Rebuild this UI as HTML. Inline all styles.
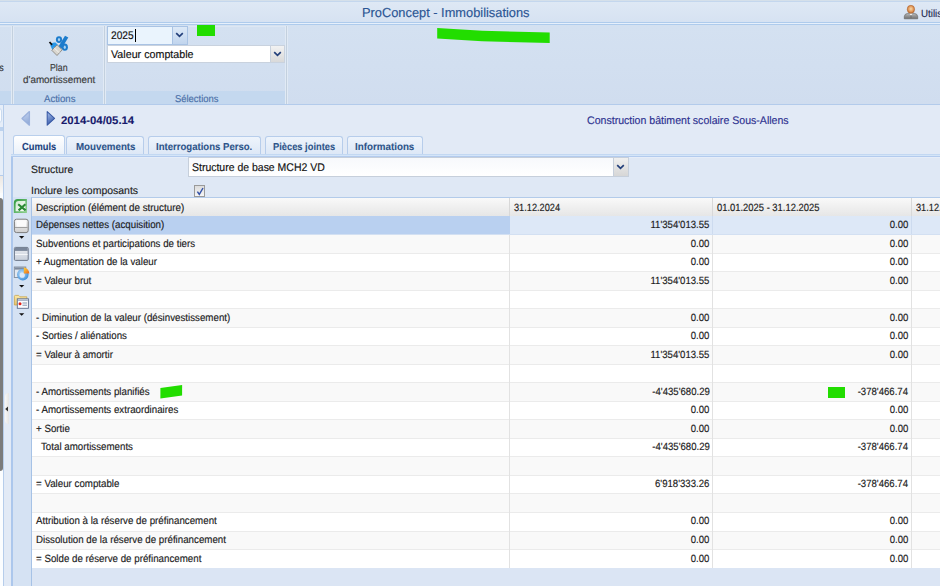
<!DOCTYPE html>
<html><head><meta charset="utf-8">
<style>
*{margin:0;padding:0;box-sizing:border-box}
html,body{width:940px;height:586px;overflow:hidden}
body{position:relative;text-rendering:geometricPrecision;background:#e2eaf6;font-family:"Liberation Sans",sans-serif;color:#1e1e1e}
.a{position:absolute}
.t{position:absolute;white-space:nowrap;line-height:1;-webkit-text-stroke:0.15px currentColor}
.g{font-size:9.7px;color:#1b1b1b}
.tab{position:absolute;border:1px solid #b7cdeb;border-bottom:none;border-radius:3px 3px 0 0;background:linear-gradient(#eef4fc,#dce7f6)}
.tabt{position:absolute;white-space:nowrap;line-height:1;font-size:9.6px;font-weight:bold;color:#1f4a80}
</style></head><body>

<!-- Title bar -->
<div class="a" style="left:0;top:0;width:940px;height:22px;background:linear-gradient(#dfe9f5,#d6e2f2)"></div>
<div class="a" style="left:0;top:0;width:940px;height:1px;background:#d5e0ea"></div>
<div class="a" style="left:0;top:1px;width:940px;height:1px;background:#c4d7ee"></div>
<div class="a" style="left:0;top:22px;width:940px;height:1px;background:#aecbec"></div>
<div class="a" style="left:0;top:23px;width:940px;height:1px;background:#e6f0fc"></div>
<div class="a" style="left:0;top:24px;width:940px;height:1px;background:#aecbec"></div>
<svg class="a" style="left:903px;top:4px" width="16" height="16" viewBox="0 0 16 16">
 <defs><radialGradient id="hd" cx="0.5" cy="0.45" r="0.55"><stop offset="0" stop-color="#f8d9a8"/><stop offset="0.6" stop-color="#e29a5c"/><stop offset="1" stop-color="#b8652a"/></radialGradient>
 <linearGradient id="bd" x1="0" y1="0" x2="0" y2="1"><stop offset="0" stop-color="#b8b8b8"/><stop offset="1" stop-color="#707070"/></linearGradient></defs>
 <path d="M1.3 14.8 L1.3 12.6 Q1.6 9.6 4.6 9.4 L11.4 9.4 Q14.4 9.6 14.7 12.6 L14.7 14.8 Z" fill="url(#bd)" stroke="#5e5e5e" stroke-width="0.6"/>
 <path d="M6.6 9.4 L8 12.6 L9.4 9.4Z" fill="#f2f2f2"/>
 <path d="M7.6 11 L8 14.8 L8.4 11Z" fill="#3a3a3a"/>
 <ellipse cx="7.9" cy="5.3" rx="3.7" ry="4" fill="url(#hd)" stroke="#b0642c" stroke-width="0.5"/>
</svg>

<!-- Ribbon -->
<div class="a" style="left:0;top:25px;width:940px;height:80px;background:linear-gradient(#d4e1f1,#d0ddef)"></div>
<div class="a" style="left:0;top:26px;width:287px;height:1px;background:#dde7f3"></div>
<!-- left partial group -->
<div class="a" style="left:0;top:91px;width:11px;height:13px;background:#c4d8ef"></div>
<div class="a" style="left:11px;top:26px;width:1px;height:78px;background:#e1eaf5"></div><div class="a" style="left:12px;top:26px;width:1px;height:78px;background:#c3d0de"></div><div class="a" style="left:13px;top:26px;width:1px;height:78px;background:#e1eaf5"></div>
<!-- Actions group -->
<div class="a" style="left:14px;top:91px;width:89px;height:13px;background:#c4d8ef"></div>
<div class="a" style="left:103px;top:26px;width:1px;height:78px;background:#e1eaf5"></div><div class="a" style="left:104px;top:26px;width:1px;height:78px;background:#c3d0de"></div><div class="a" style="left:105px;top:26px;width:1px;height:78px;background:#e1eaf5"></div>
<svg class="a" style="left:48px;top:35px" width="22" height="22" viewBox="0 0 22 22">
 <g fill="#1d7ccc">
  <ellipse cx="11" cy="4.6" rx="3.1" ry="3.4"/>
  <ellipse cx="16.8" cy="12.2" rx="3.1" ry="3.6"/>
  <path d="M17 0.8 L20.3 2.6 L11.8 16.5 L8.6 14.6 Z"/>
 </g>
 <ellipse cx="11" cy="4.6" rx="1.1" ry="1.6" fill="#a7d2f2"/>
 <ellipse cx="16.8" cy="12.2" rx="1.1" ry="1.7" fill="#a7d2f2"/>
 <path d="M2.3 10.5 Q3.5 7 7.5 7.5 L10.5 10.5 L5 16 Z" fill="#2a98e8"/>
 <path d="M9.2 9.8 L14.2 14.8 L9 20.5 L3.8 15.3 Z" fill="#d9d6cf" stroke="#8b8780" stroke-width="0.9"/>
 <path d="M6.2 12.8 L11.2 17.8" stroke="#f4f4f0" stroke-width="1"/>
 <path d="M1.5 7 L4 9.8" stroke="#111" stroke-width="1.8"/>
</svg>
<!-- Selections group -->
<div class="a" style="left:106px;top:91px;width:179px;height:13px;background:#c4d8ef"></div>
<div class="a" style="left:285px;top:26px;width:1px;height:78px;background:#e1eaf5"></div><div class="a" style="left:286px;top:26px;width:1px;height:78px;background:#c3d0de"></div><div class="a" style="left:287px;top:26px;width:1px;height:78px;background:#e1eaf5"></div>
<!-- combo 2025 -->
<div class="a" style="left:107px;top:26px;width:81px;height:19px;border:1px solid #a9c3e4;background:#eaf4fd"></div>
<div class="a" style="left:172px;top:27px;width:15px;height:17px;border-left:1px solid #a9c3e4;background:linear-gradient(#dde9f7,#c1d5ee)"></div>
<svg class="a" style="left:175px;top:31px" width="9" height="8" viewBox="0 0 9 8"><path d="M1.2 2.2 L4.5 5.3 L7.8 2.2" fill="none" stroke="#233f7a" stroke-width="1.7"/></svg>
<div class="a" style="left:134.5px;top:29px;width:1px;height:13px;background:#000"></div>
<!-- combo valeur comptable -->
<div class="a" style="left:107px;top:45px;width:178px;height:18px;border:1px solid #c9d2de;background:#fff"></div>
<div class="a" style="left:270px;top:46px;width:14px;height:16px;border-left:1px solid #c9d2de;background:linear-gradient(#f2f2f2,#d9d9d9)"></div>
<svg class="a" style="left:272.5px;top:50px" width="9" height="8" viewBox="0 0 9 8"><path d="M1.2 2.2 L4.5 5.3 L7.8 2.2" fill="none" stroke="#233f7a" stroke-width="1.7"/></svg>

<div class="a" style="left:0;top:104px;width:940px;height:1px;background:#b3cbeb"></div>

<!-- left edge -->
<div class="a" style="left:0;top:105px;width:3px;height:481px;background:#fbfdff"></div>
<div class="a" style="left:0;top:105px;width:3px;height:70px;background:#e6eef9"></div>
<div class="a" style="left:0;top:175px;width:3px;height:1px;background:#b5cceb"></div>
<div class="a" style="left:0;top:176px;width:3px;height:17px;background:linear-gradient(#ebe7e3,#fafafa)"></div>
<div class="a" style="left:3px;top:105px;width:1px;height:481px;background:#b6cdeb"></div>
<div class="a" style="left:-6px;top:108px;width:8px;height:15px;border-radius:3px;background:#fbfdff;border:1px solid #c9daef"></div>
<div class="a" style="left:0;top:127px;width:3px;height:4px;background:#bcd2ee"></div>
<div class="a" style="left:-4px;top:198px;width:7px;height:273px;border-radius:3px;background:#7b7b7b"></div>
<div class="a" style="left:4.5px;top:393px;width:4.5px;height:31px;border-radius:4px 0 0 4px;background:linear-gradient(90deg,#f7f7f7,#e4e4e4)"></div>
<svg class="a" style="left:4px;top:405px" width="5" height="8" viewBox="0 0 5 8"><path d="M1.2 4 L4 1.6 L4 6.4Z" fill="#333"/></svg>
<!-- nav -->
<svg class="a" style="left:16px;top:106px" width="44" height="24" viewBox="0 0 44 24">
 <defs>
  <linearGradient id="la" x1="0" y1="0" x2="0.3" y2="1"><stop offset="0" stop-color="#c9d8f2"/><stop offset="1" stop-color="#93acd9"/></linearGradient>
  <linearGradient id="ra" x1="0" y1="0" x2="0.3" y2="1"><stop offset="0" stop-color="#a9c2ee"/><stop offset="1" stop-color="#3a5cab"/></linearGradient>
 </defs>
 <path d="M6 12.4 L13.4 5.6 L13.4 19.2 Z" fill="url(#la)" stroke="#9ab1dc" stroke-width="1.3" stroke-linejoin="round"/>
 <path d="M38.6 12.4 L31.2 5.6 L31.2 19.2 Z" fill="url(#ra)" stroke="#3858a4" stroke-width="1.05" stroke-linejoin="round"/>
</svg>
<!-- tab content -->

<!-- tabs -->
<div class="tab" style="left:66px;top:135.5px;width:78px;height:19px"></div>
<div class="tab" style="left:148px;top:135.5px;width:113px;height:19px"></div>
<div class="tab" style="left:264.5px;top:135.5px;width:78.5px;height:19px"></div>
<div class="tab" style="left:346.5px;top:135.5px;width:76.5px;height:19px"></div>
<div class="tab" style="left:13px;top:135px;width:52px;height:19.5px;background:linear-gradient(#ffffff,#e9f0f9);border-color:#b9cfec"></div>

<div class="a" style="left:11px;top:154px;width:935px;height:440px;background:#dfe8f5;border-left:2px solid #acc7ec"></div>
<div class="a" style="left:11px;top:154px;width:929px;height:1px;background:#c3d8f2"></div>
<div class="a" style="left:11px;top:155px;width:929px;height:1px;background:#d4e5f8"></div>
<div class="a" style="left:11px;top:156px;width:929px;height:1px;background:#b3cbee"></div>
<div class="a" style="left:13px;top:157px;width:927px;height:1px;background:#e6edf8"></div>
<!-- structure -->
<div class="a" style="left:188px;top:157px;width:441px;height:20px;border:1px solid #c6cfdb;background:linear-gradient(#f7f9fc,#ffffff)"></div>
<div class="a" style="left:613px;top:158px;width:15px;height:18px;border-left:1px solid #c6cfdb;background:linear-gradient(#f0f0f0,#d6d6d6)"></div>
<svg class="a" style="left:616px;top:162.6px" width="9" height="8" viewBox="0 0 9 8"><path d="M1.2 2.2 L4.5 5.3 L7.8 2.2" fill="none" stroke="#233f7a" stroke-width="1.7"/></svg>
<div class="a" style="left:194px;top:184.5px;width:11px;height:12.5px;border:1px solid #9a9a9a;background:linear-gradient(#dcdcdc,#f6f6f6)"></div>
<svg class="a" style="left:195px;top:185.5px" width="10" height="10" viewBox="0 0 10 10"><path d="M2.4 5.6 L4.3 8.4 L8 2" fill="none" stroke="#3553a8" stroke-width="1.45"/></svg>

<!-- toolbar strip -->
<div class="a" style="left:13px;top:197px;width:18px;height:389px;background:#d5e2f3"></div>

<!-- grid -->
<div class="a" style="left:31px;top:197px;width:909px;height:389px;background:#fff;border-left:1px solid #a6c2e6;border-top:1px solid #b3cbea"></div>
<div class="a" style="left:32px;top:198px;width:908px;height:18px;background:linear-gradient(#f9f9f9,#e6e6e6)"></div>
<div class="a" style="left:509px;top:198px;width:1px;height:18px;background:#d8d8d8"></div>
<div class="a" style="left:712px;top:198px;width:1px;height:18px;background:#d8d8d8"></div>
<div class="a" style="left:911px;top:198px;width:1px;height:18px;background:#d8d8d8"></div>
<div class="a" style="left:32px;top:216px;width:478px;height:18px;background:#b9d0f0"></div>
<div class="a" style="left:510px;top:216px;width:430px;height:18px;background:#dde8f7"></div>
<div class="a" style="left:32px;top:234px;width:908px;height:1px;background:#d3e0f2"></div>
<div class="a" style="left:32px;top:235px;width:908px;height:18px;background:#f9f9f9"></div>
<div class="a" style="left:32px;top:253px;width:908px;height:1px;background:#ebebeb"></div>
<div class="a" style="left:32px;top:254px;width:908px;height:17px;background:#ffffff"></div>
<div class="a" style="left:32px;top:271px;width:908px;height:1px;background:#ebebeb"></div>
<div class="a" style="left:32px;top:272px;width:908px;height:18px;background:#f9f9f9"></div>
<div class="a" style="left:32px;top:290px;width:908px;height:1px;background:#ebebeb"></div>
<div class="a" style="left:32px;top:291px;width:908px;height:17px;background:#ffffff"></div>
<div class="a" style="left:32px;top:308px;width:908px;height:1px;background:#ebebeb"></div>
<div class="a" style="left:32px;top:309px;width:908px;height:18px;background:#f9f9f9"></div>
<div class="a" style="left:32px;top:327px;width:908px;height:1px;background:#ebebeb"></div>
<div class="a" style="left:32px;top:328px;width:908px;height:17px;background:#ffffff"></div>
<div class="a" style="left:32px;top:345px;width:908px;height:1px;background:#ebebeb"></div>
<div class="a" style="left:32px;top:346px;width:908px;height:18px;background:#f9f9f9"></div>
<div class="a" style="left:32px;top:364px;width:908px;height:1px;background:#ebebeb"></div>
<div class="a" style="left:32px;top:365px;width:908px;height:17px;background:#ffffff"></div>
<div class="a" style="left:32px;top:382px;width:908px;height:1px;background:#ebebeb"></div>
<div class="a" style="left:32px;top:383px;width:908px;height:18px;background:#f9f9f9"></div>
<div class="a" style="left:32px;top:401px;width:908px;height:1px;background:#ebebeb"></div>
<div class="a" style="left:32px;top:402px;width:908px;height:17px;background:#ffffff"></div>
<div class="a" style="left:32px;top:419px;width:908px;height:1px;background:#ebebeb"></div>
<div class="a" style="left:32px;top:420px;width:908px;height:18px;background:#f9f9f9"></div>
<div class="a" style="left:32px;top:438px;width:908px;height:1px;background:#ebebeb"></div>
<div class="a" style="left:32px;top:439px;width:908px;height:17px;background:#ffffff"></div>
<div class="a" style="left:32px;top:456px;width:908px;height:1px;background:#ebebeb"></div>
<div class="a" style="left:32px;top:457px;width:908px;height:18px;background:#f9f9f9"></div>
<div class="a" style="left:32px;top:475px;width:908px;height:1px;background:#ebebeb"></div>
<div class="a" style="left:32px;top:476px;width:908px;height:17px;background:#ffffff"></div>
<div class="a" style="left:32px;top:493px;width:908px;height:1px;background:#ebebeb"></div>
<div class="a" style="left:32px;top:494px;width:908px;height:18px;background:#f9f9f9"></div>
<div class="a" style="left:32px;top:512px;width:908px;height:1px;background:#ebebeb"></div>
<div class="a" style="left:32px;top:513px;width:908px;height:18px;background:#ffffff"></div>
<div class="a" style="left:32px;top:531px;width:908px;height:1px;background:#ebebeb"></div>
<div class="a" style="left:32px;top:532px;width:908px;height:17px;background:#f9f9f9"></div>
<div class="a" style="left:32px;top:549px;width:908px;height:1px;background:#ebebeb"></div>
<div class="a" style="left:32px;top:550px;width:908px;height:17px;background:#ffffff"></div>
<div class="a" style="left:32px;top:567px;width:908px;height:1px;background:#ffffff"></div>
<div class="a" style="left:509px;top:235px;width:1px;height:333px;background:#e2e2e2"></div>
<div class="a" style="left:712px;top:235px;width:1px;height:333px;background:#e2e2e2"></div>
<div class="a" style="left:712px;top:216px;width:1px;height:18px;background:#cddbef"></div>
<div class="a" style="left:911px;top:216px;width:1px;height:18px;background:#cddbef"></div>
<div class="a" style="left:911px;top:235px;width:1px;height:333px;background:#e2e2e2"></div>
<div class="a" style="left:32px;top:568px;width:908px;height:18px;background:#dbe5f4"></div>
<div class="a" style="left:828px;top:387px;width:17px;height:10.5px;background:#22dd00"></div>

<!-- toolbar icons -->
<svg class="a" style="left:12px;top:197px" width="18" height="125" viewBox="0 0 18 125">
 <defs>
  <linearGradient id="xg" x1="0" y1="0" x2="1" y2="1"><stop offset="0" stop-color="#2f9a3e"/><stop offset="1" stop-color="#8fd08f"/></linearGradient>
  <linearGradient id="xi" x1="0" y1="0" x2="1" y2="1"><stop offset="0" stop-color="#cfe9cf"/><stop offset="1" stop-color="#ffffff"/></linearGradient>
  <linearGradient id="gg" x1="0" y1="0" x2="0" y2="1"><stop offset="0" stop-color="#f6f6f6"/><stop offset="1" stop-color="#cfcfcf"/></linearGradient>
  <linearGradient id="wg" x1="0" y1="0" x2="0" y2="1"><stop offset="0" stop-color="#e9ecf1"/><stop offset="1" stop-color="#c9d0db"/></linearGradient>
  <radialGradient id="pg" cx="0.4" cy="0.4" r="0.7"><stop offset="0" stop-color="#bfe0fb"/><stop offset="1" stop-color="#2f86d6"/></radialGradient>
  <linearGradient id="og" x1="0" y1="0" x2="1" y2="1"><stop offset="0" stop-color="#ffd23a"/><stop offset="1" stop-color="#e8661a"/></linearGradient>
  <linearGradient id="fg" x1="0" y1="0" x2="0" y2="1"><stop offset="0" stop-color="#fbe8a8"/><stop offset="1" stop-color="#e6c366"/></linearGradient>
 </defs>
 <!-- excel -->
 <path d="M1.8 6 Q1.8 2 5.8 2 L14.9 2 L14.9 15.9 L1.8 15.9 Z" fill="url(#xg)"/>
 <path d="M3.6 7 Q3.6 4 6.6 4 L13.4 4 L13.4 14.3 L3.6 14.3 Z" fill="url(#xi)"/>
 <path d="M6.2 7.2 L13.6 13.4 M13.4 7.2 L6.6 13.4" stroke="#2b8a35" stroke-width="2.1"/>
 <!-- save -->
 <rect x="2.4" y="22.2" width="13.8" height="13.4" rx="2.2" fill="url(#gg)" stroke="#7d7d7d" stroke-width="1"/>
 <rect x="4.5" y="23.2" width="9.6" height="6.5" fill="#fbfbfb"/>
 <path d="M3 30.5 L15.6 30.5" stroke="#9a9a9a" stroke-width="0.9"/>
 <path d="M7 39 L12.3 39 L9.65 41.8Z" fill="#111"/>
 <!-- window -->
 <rect x="2.4" y="50.4" width="13.8" height="13" rx="1" fill="url(#wg)" stroke="#6d788a" stroke-width="1"/>
 <rect x="2.9" y="50.9" width="12.8" height="3" fill="#7a879b"/>
 <path d="M3 57.5 L15.6 57.5" stroke="#f4f6f9" stroke-width="1"/>
 <!-- chart -->
 <rect x="2.3" y="70" width="11.5" height="10.5" fill="#e3e8ef" stroke="#7e8a9c" stroke-width="0.9"/>
 <rect x="2.7" y="70.4" width="10.7" height="2.2" fill="#7e8a9c"/>
 <circle cx="10.8" cy="77.6" r="5.8" fill="url(#pg)"/>
 <circle cx="10.2" cy="78.2" r="2.6" fill="#dbe9f8"/>
 <path d="M11.8 76.4 L11.8 70.6 A5.8 5.8 0 0 1 17.3 76.4 Z" fill="url(#og)"/>
 <path d="M7 88 L12.3 88 L9.65 90.6Z" fill="#111"/>
 <!-- folder report -->
 <path d="M2.4 99.4 Q2.4 98.4 3.4 98.4 L6.6 98.4 L8 99.8 L14.8 99.8 L14.8 108 L2.4 108 Z" fill="url(#fg)" stroke="#c9a54e" stroke-width="0.8"/>
 <rect x="5.3" y="101.8" width="11.1" height="9.5" fill="#f9fbfe" stroke="#5d6e8c" stroke-width="0.9"/>
 <rect x="6" y="102.4" width="9.8" height="1.6" fill="#aab6cc"/>
 <circle cx="8" cy="106.8" r="1.5" fill="#e2231a"/>
 <path d="M10.5 106 L15 106 M10.5 108.2 L15 108.2" stroke="#7b8aa6" stroke-width="0.9"/>
 <path d="M7 116.2 L12.3 116.2 L9.65 118.8Z" fill="#111"/>
</svg>

<!-- green redactions -->
<div class="a" style="left:197px;top:25px;width:18px;height:11px;background:#22dd00"></div>
<svg class="a" style="left:0;top:0" width="940" height="586" viewBox="0 0 940 586">
 <path d="M437.2 27.9 L482.4 30.8 L549.7 32.6 L549.7 43 L482 41.3 L437.2 38.4 Z" fill="#22dd00"/>
 <path d="M160.4 388.1 L182.1 384.9 L182.1 395.4 L160.4 398.6 Z" fill="#22dd00"/>
</svg>

<div class="t" style="top:5.60px;font-size:13.08px;color:#2b5593;left:362.30px;transform:scaleX(0.9805);transform-origin:0 0;">ProConcept - Immobilisations</div>
<div class="t" style="top:10.00px;font-size:10.47px;color:#1e2a50;left:921.00px;transform:scaleX(0.9300);transform-origin:0 0;">Utilis</div>
<div class="t" style="top:64.00px;font-size:10.17px;color:#333;left:-0.90px;transform:scaleX(0.9300);transform-origin:0 0;">s</div>
<div class="t" style="top:63.70px;font-size:10.03px;color:#3c3c3c;left:50.00px;transform:scaleX(0.8767);transform-origin:0 0;">Plan</div>
<div class="t" style="top:76.30px;font-size:10.03px;color:#3c3c3c;left:22.70px;transform:scaleX(0.9868);transform-origin:0 0;">d'amortissement</div>
<div class="t" style="top:94.60px;font-size:9.88px;color:#4a6fa8;left:43.80px;transform:scaleX(0.9722);transform-origin:0 0;">Actions</div>
<div class="t" style="top:94.60px;font-size:9.88px;color:#4a6fa8;left:174.50px;transform:scaleX(0.9543);transform-origin:0 0;">Sélections</div>
<div class="t" style="top:31.20px;font-size:11.05px;color:#111;left:110.70px;transform:scaleX(0.9193);transform-origin:0 0;">2025</div>
<div class="t" style="top:49.70px;font-size:11.05px;color:#111;left:110.70px;transform:scaleX(0.9698);transform-origin:0 0;">Valeur comptable</div>
<div class="t" style="top:115.80px;font-size:11.05px;color:#17196c;font-weight:700;-webkit-text-stroke:0.08px currentColor;left:61.30px;transform:scaleX(1.0270);transform-origin:0 0;">2014-04/05.14</div>
<div class="t" style="top:116.00px;font-size:11.05px;color:#2d3190;left:586.60px;transform:scaleX(0.9575);transform-origin:0 0;">Construction bâtiment scolaire Sous-Allens</div>
<div class="t" style="top:142.60px;font-size:10.17px;color:#1a3f7c;font-weight:700;-webkit-text-stroke:0.08px currentColor;left:22.00px;transform:scaleX(0.9170);transform-origin:0 0;">Cumuls</div>
<div class="t" style="top:142.60px;font-size:10.17px;color:#2d5489;font-weight:700;-webkit-text-stroke:0.08px currentColor;left:75.70px;transform:scaleX(0.9588);transform-origin:0 0;">Mouvements</div>
<div class="t" style="top:142.60px;font-size:10.17px;color:#2d5489;font-weight:700;-webkit-text-stroke:0.08px currentColor;left:156.00px;transform:scaleX(0.9425);transform-origin:0 0;">Interrogations Perso.</div>
<div class="t" style="top:142.60px;font-size:10.17px;color:#2d5489;font-weight:700;-webkit-text-stroke:0.08px currentColor;left:272.50px;transform:scaleX(0.9169);transform-origin:0 0;">Pièces jointes</div>
<div class="t" style="top:142.60px;font-size:10.17px;color:#2d5489;font-weight:700;-webkit-text-stroke:0.08px currentColor;left:354.50px;transform:scaleX(0.9645);transform-origin:0 0;">Informations</div>
<div class="t" style="top:164.70px;font-size:10.61px;color:#1e1e1e;left:30.60px;transform:scaleX(0.9803);transform-origin:0 0;">Structure</div>
<div class="t" style="top:163.10px;font-size:11.19px;color:#111;left:191.90px;transform:scaleX(0.9365);transform-origin:0 0;">Structure de base MCH2 VD</div>
<div class="t" style="top:185.50px;font-size:10.61px;color:#1e1e1e;left:30.60px;transform:scaleX(0.9870);transform-origin:0 0;">Inclure les composants</div>
<div class="t" style="top:204.00px;font-size:10.47px;color:#1b1b1b;left:35.50px;transform:scaleX(0.9398);transform-origin:0 0;">Description (élément de structure)</div>
<div class="t" style="top:204.00px;font-size:10.47px;color:#1b1b1b;left:513.60px;transform:scaleX(0.8797);transform-origin:0 0;">31.12.2024</div>
<div class="t" style="top:204.00px;font-size:10.47px;color:#1b1b1b;left:716.60px;transform:scaleX(0.8974);transform-origin:0 0;">01.01.2025 - 31.12.2025</div>
<div class="t" style="top:204.00px;font-size:10.47px;color:#1b1b1b;left:915.50px;transform:scaleX(0.8797);transform-origin:0 0;">31.12.2025</div>
<div class="t" style="top:221.00px;font-size:10.47px;color:#1b1b1b;left:35.50px;transform:scaleX(0.9300);transform-origin:0 0;">Dépenses nettes (acquisition)</div>
<div class="t" style="top:221.00px;font-size:10.47px;color:#1b1b1b;left:645.44px;transform:scaleX(0.9150);transform-origin:100% 0;">11'354'013.55</div>
<div class="t" style="top:221.00px;font-size:10.47px;color:#1b1b1b;left:887.62px;transform:scaleX(0.9150);transform-origin:100% 0;">0.00</div>
<div class="t" style="top:239.53px;font-size:10.47px;color:#1b1b1b;left:35.50px;transform:scaleX(0.9300);transform-origin:0 0;">Subventions et participations de tiers</div>
<div class="t" style="top:239.53px;font-size:10.47px;color:#1b1b1b;left:689.42px;transform:scaleX(0.9150);transform-origin:100% 0;">0.00</div>
<div class="t" style="top:239.53px;font-size:10.47px;color:#1b1b1b;left:887.62px;transform:scaleX(0.9150);transform-origin:100% 0;">0.00</div>
<div class="t" style="top:258.06px;font-size:10.47px;color:#1b1b1b;left:35.50px;transform:scaleX(0.9300);transform-origin:0 0;">+ Augmentation de la valeur</div>
<div class="t" style="top:258.06px;font-size:10.47px;color:#1b1b1b;left:689.42px;transform:scaleX(0.9150);transform-origin:100% 0;">0.00</div>
<div class="t" style="top:258.06px;font-size:10.47px;color:#1b1b1b;left:887.62px;transform:scaleX(0.9150);transform-origin:100% 0;">0.00</div>
<div class="t" style="top:276.59px;font-size:10.47px;color:#1b1b1b;left:35.50px;transform:scaleX(0.9300);transform-origin:0 0;">= Valeur brut</div>
<div class="t" style="top:276.59px;font-size:10.47px;color:#1b1b1b;left:645.44px;transform:scaleX(0.9150);transform-origin:100% 0;">11'354'013.55</div>
<div class="t" style="top:276.59px;font-size:10.47px;color:#1b1b1b;left:887.62px;transform:scaleX(0.9150);transform-origin:100% 0;">0.00</div>
<div class="t" style="top:313.65px;font-size:10.47px;color:#1b1b1b;left:35.50px;transform:scaleX(0.9300);transform-origin:0 0;">- Diminution de la valeur (désinvestissement)</div>
<div class="t" style="top:313.65px;font-size:10.47px;color:#1b1b1b;left:689.42px;transform:scaleX(0.9150);transform-origin:100% 0;">0.00</div>
<div class="t" style="top:313.65px;font-size:10.47px;color:#1b1b1b;left:887.62px;transform:scaleX(0.9150);transform-origin:100% 0;">0.00</div>
<div class="t" style="top:332.18px;font-size:10.47px;color:#1b1b1b;left:35.50px;transform:scaleX(0.9300);transform-origin:0 0;">- Sorties / aliénations</div>
<div class="t" style="top:332.18px;font-size:10.47px;color:#1b1b1b;left:689.42px;transform:scaleX(0.9150);transform-origin:100% 0;">0.00</div>
<div class="t" style="top:332.18px;font-size:10.47px;color:#1b1b1b;left:887.62px;transform:scaleX(0.9150);transform-origin:100% 0;">0.00</div>
<div class="t" style="top:350.71px;font-size:10.47px;color:#1b1b1b;left:35.50px;transform:scaleX(0.9300);transform-origin:0 0;">= Valeur à amortir</div>
<div class="t" style="top:350.71px;font-size:10.47px;color:#1b1b1b;left:645.44px;transform:scaleX(0.9150);transform-origin:100% 0;">11'354'013.55</div>
<div class="t" style="top:350.71px;font-size:10.47px;color:#1b1b1b;left:887.62px;transform:scaleX(0.9150);transform-origin:100% 0;">0.00</div>
<div class="t" style="top:387.77px;font-size:10.47px;color:#1b1b1b;left:35.50px;transform:scaleX(0.9300);transform-origin:0 0;">- Amortissements planifiés</div>
<div class="t" style="top:387.77px;font-size:10.47px;color:#1b1b1b;left:647.00px;transform:scaleX(0.9150);transform-origin:100% 0;">-4'435'680.29</div>
<div class="t" style="top:387.77px;font-size:10.47px;color:#1b1b1b;left:853.02px;transform:scaleX(0.9150);transform-origin:100% 0;">-378'466.74</div>
<div class="t" style="top:406.30px;font-size:10.47px;color:#1b1b1b;left:35.50px;transform:scaleX(0.9300);transform-origin:0 0;">- Amortissements extraordinaires</div>
<div class="t" style="top:406.30px;font-size:10.47px;color:#1b1b1b;left:689.42px;transform:scaleX(0.9150);transform-origin:100% 0;">0.00</div>
<div class="t" style="top:406.30px;font-size:10.47px;color:#1b1b1b;left:887.62px;transform:scaleX(0.9150);transform-origin:100% 0;">0.00</div>
<div class="t" style="top:424.83px;font-size:10.47px;color:#1b1b1b;left:35.50px;transform:scaleX(0.9300);transform-origin:0 0;">+ Sortie</div>
<div class="t" style="top:424.83px;font-size:10.47px;color:#1b1b1b;left:689.42px;transform:scaleX(0.9150);transform-origin:100% 0;">0.00</div>
<div class="t" style="top:424.83px;font-size:10.47px;color:#1b1b1b;left:887.62px;transform:scaleX(0.9150);transform-origin:100% 0;">0.00</div>
<div class="t" style="top:443.36px;font-size:10.47px;color:#1b1b1b;left:40.50px;transform:scaleX(0.9300);transform-origin:0 0;">Total amortissements</div>
<div class="t" style="top:443.36px;font-size:10.47px;color:#1b1b1b;left:647.00px;transform:scaleX(0.9150);transform-origin:100% 0;">-4'435'680.29</div>
<div class="t" style="top:443.36px;font-size:10.47px;color:#1b1b1b;left:853.02px;transform:scaleX(0.9150);transform-origin:100% 0;">-378'466.74</div>
<div class="t" style="top:480.42px;font-size:10.47px;color:#1b1b1b;left:35.50px;transform:scaleX(0.9300);transform-origin:0 0;">= Valeur comptable</div>
<div class="t" style="top:480.42px;font-size:10.47px;color:#1b1b1b;left:650.49px;transform:scaleX(0.9150);transform-origin:100% 0;">6'918'333.26</div>
<div class="t" style="top:480.42px;font-size:10.47px;color:#1b1b1b;left:853.02px;transform:scaleX(0.9150);transform-origin:100% 0;">-378'466.74</div>
<div class="t" style="top:517.48px;font-size:10.47px;color:#1b1b1b;left:35.50px;transform:scaleX(0.9300);transform-origin:0 0;">Attribution à la réserve de préfinancement</div>
<div class="t" style="top:517.48px;font-size:10.47px;color:#1b1b1b;left:689.42px;transform:scaleX(0.9150);transform-origin:100% 0;">0.00</div>
<div class="t" style="top:517.48px;font-size:10.47px;color:#1b1b1b;left:887.62px;transform:scaleX(0.9150);transform-origin:100% 0;">0.00</div>
<div class="t" style="top:536.01px;font-size:10.47px;color:#1b1b1b;left:35.50px;transform:scaleX(0.9300);transform-origin:0 0;">Dissolution de la réserve de préfinancement</div>
<div class="t" style="top:536.01px;font-size:10.47px;color:#1b1b1b;left:689.42px;transform:scaleX(0.9150);transform-origin:100% 0;">0.00</div>
<div class="t" style="top:536.01px;font-size:10.47px;color:#1b1b1b;left:887.62px;transform:scaleX(0.9150);transform-origin:100% 0;">0.00</div>
<div class="t" style="top:554.54px;font-size:10.47px;color:#1b1b1b;left:35.50px;transform:scaleX(0.9300);transform-origin:0 0;">= Solde de réserve de préfinancement</div>
<div class="t" style="top:554.54px;font-size:10.47px;color:#1b1b1b;left:689.42px;transform:scaleX(0.9150);transform-origin:100% 0;">0.00</div>
<div class="t" style="top:554.54px;font-size:10.47px;color:#1b1b1b;left:887.62px;transform:scaleX(0.9150);transform-origin:100% 0;">0.00</div>
</body></html>
